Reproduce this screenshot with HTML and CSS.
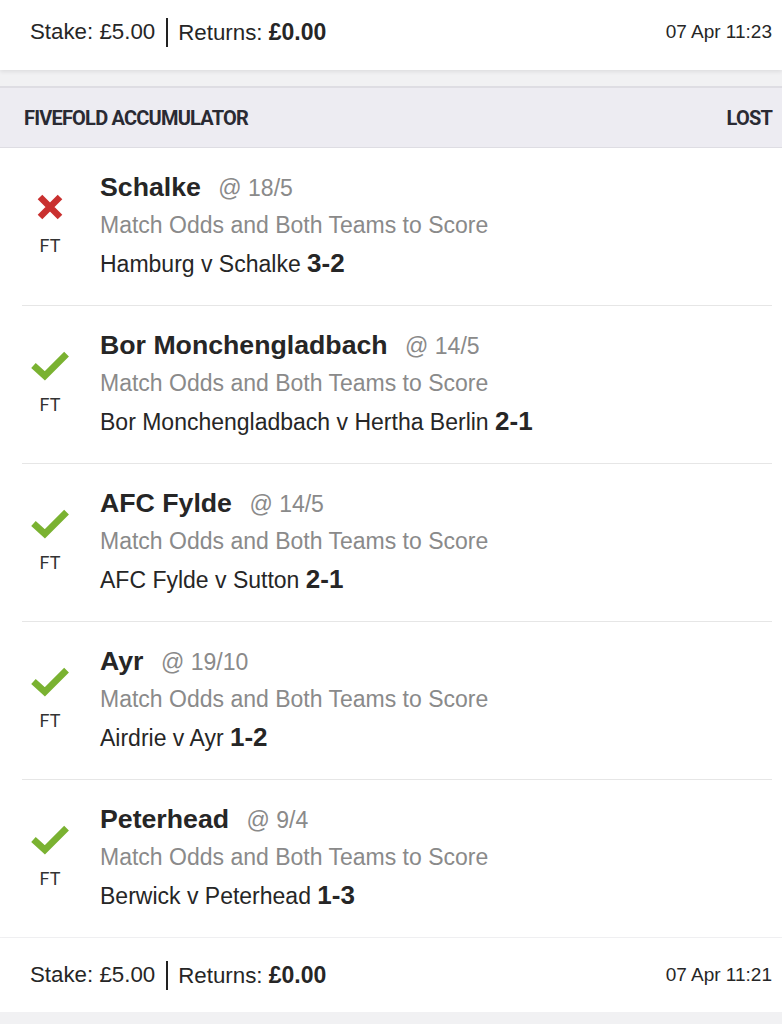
FILE: index.html
```html
<!DOCTYPE html>
<html lang="en">
<head>
    <meta charset="UTF-8">
    <meta name="viewport" content="width=device-width, initial-scale=1.0">
    <title>Bet Receipt</title>
    <link rel="stylesheet" href="styles.css">
</head>
<body>
    <div class="summary summary-top">
        <div class="stake">
            <span>Stake: £5.00</span><span class="sep"></span><span>Returns: <b>£0.00</b></span>
        </div>
        <div class="date">07 Apr 11:23</div>
    </div>

    <div class="bet-header">
        <span>FIVEFOLD ACCUMULATOR</span>
        <span>LOST</span>
    </div>

    <div class="legs">
        <div class="leg">
            <div class="status">
                <svg class="icon" viewBox="0 0 30 30"><path d="M5 5 L25 25 M25 5 L5 25" stroke="#c9302f" stroke-width="6.5" fill="none"/></svg>
                <span class="ft">FT</span>
            </div>
            <div class="info">
                <div class="pick">Schalke <span class="odds">@ 18/5</span></div>
                <div class="market">Match Odds and Both Teams to Score</div>
                <div class="match">Hamburg v Schalke <b>3-2</b></div>
            </div>
        </div>

        <div class="leg">
            <div class="status">
                <svg class="icon check" viewBox="0 0 38 30"><path d="M3 15 L14 25 L35 4" stroke="#7ab231" stroke-width="6.5" fill="none"/></svg>
                <span class="ft">FT</span>
            </div>
            <div class="info">
                <div class="pick">Bor Monchengladbach <span class="odds">@ 14/5</span></div>
                <div class="market">Match Odds and Both Teams to Score</div>
                <div class="match">Bor Monchengladbach v Hertha Berlin <b>2-1</b></div>
            </div>
        </div>

        <div class="leg">
            <div class="status">
                <svg class="icon check" viewBox="0 0 38 30"><path d="M3 15 L14 25 L35 4" stroke="#7ab231" stroke-width="6.5" fill="none"/></svg>
                <span class="ft">FT</span>
            </div>
            <div class="info">
                <div class="pick">AFC Fylde <span class="odds">@ 14/5</span></div>
                <div class="market">Match Odds and Both Teams to Score</div>
                <div class="match">AFC Fylde v Sutton <b>2-1</b></div>
            </div>
        </div>

        <div class="leg">
            <div class="status">
                <svg class="icon check" viewBox="0 0 38 30"><path d="M3 15 L14 25 L35 4" stroke="#7ab231" stroke-width="6.5" fill="none"/></svg>
                <span class="ft">FT</span>
            </div>
            <div class="info">
                <div class="pick">Ayr <span class="odds">@ 19/10</span></div>
                <div class="market">Match Odds and Both Teams to Score</div>
                <div class="match">Airdrie v Ayr <b>1-2</b></div>
            </div>
        </div>

        <div class="leg">
            <div class="status">
                <svg class="icon check" viewBox="0 0 38 30"><path d="M3 15 L14 25 L35 4" stroke="#7ab231" stroke-width="6.5" fill="none"/></svg>
                <span class="ft">FT</span>
            </div>
            <div class="info">
                <div class="pick">Peterhead <span class="odds">@ 9/4</span></div>
                <div class="market">Match Odds and Both Teams to Score</div>
                <div class="match">Berwick v Peterhead <b>1-3</b></div>
            </div>
        </div>
    </div>

    <div class="summary summary-bottom">
        <div class="stake">
            <span>Stake: £5.00</span><span class="sep"></span><span>Returns: <b>£0.00</b></span>
        </div>
        <div class="date">07 Apr 11:21</div>
    </div>
</body>
</html>
```

FILE: styles.css
```css
body {
    margin: 0;
    padding: 0;
    background-color: #f1f1f3;
    font-family: "Liberation Sans", Arial, sans-serif;
    color: #262626;
}

.summary {
    display: flex;
    justify-content: space-between;
    align-items: center;
    background-color: #fff;
    padding: 0 10px 0 30px;
    box-shadow: 0 2px 4px rgba(0, 0, 0, .08);
}

.summary-top {
    height: 64px;
    padding-bottom: 6px;
}

.summary-bottom {
    height: 74px;
    margin-top: 1px;
}

.stake {
    display: flex;
    align-items: center;
    font-size: 22.3px;
}

.stake b {
    font-size: 23px;
}

.sep {
    display: inline-block;
    width: 2px;
    height: 29px;
    background-color: #222;
    margin: 0 10px 0 11px;
}

.date {
    font-size: 19px;
}

.bet-header {
    display: flex;
    justify-content: space-between;
    align-items: center;
    margin-top: 16px;
    height: 59px;
    padding: 0 10px 0 24px;
    background-color: #edecf2;
    border-top: 2px solid #dedde3;
    border-bottom: 1px solid #dedde3;
    font-family: Roboto, sans-serif;
    font-weight: 700;
    font-size: 20px;
    letter-spacing: -.8px;
    color: #2a2a33;
}

.legs {
    background-color: #fff;
}

.leg {
    display: flex;
    height: 157px;
    margin-left: 22px;
    margin-right: 10px;
    border-bottom: 1px solid #e6e6e6;
}

.leg:last-child {
    border-bottom: none;
}

.status {
    width: 56px;
    display: flex;
    flex-direction: column;
    align-items: center;
    padding-top: 44px;
}

.icon {
    width: 30px;
    height: 30px;
}

.icon.check {
    width: 40px;
    height: 31px;
}

.ft {
    font-family: Roboto, sans-serif;
    font-size: 18px;
    line-height: 20px;
    margin-top: 14px;
    color: #333;
}

.info {
    margin-left: 22px;
    padding-top: 24px;
}

.pick {
    font-size: 26.7px;
    font-weight: 700;
    line-height: 30px;
}

.odds {
    font-size: 23px;
    font-weight: 400;
    color: #8a8a8a;
    margin-left: 10px;
}

.market {
    font-size: 23px;
    line-height: 30px;
    margin-top: 7px;
    color: #8a8a8a;
}

.match {
    font-size: 23px;
    line-height: 30px;
    margin-top: 8px;
}

.match b {
    font-size: 26px;
}
```
